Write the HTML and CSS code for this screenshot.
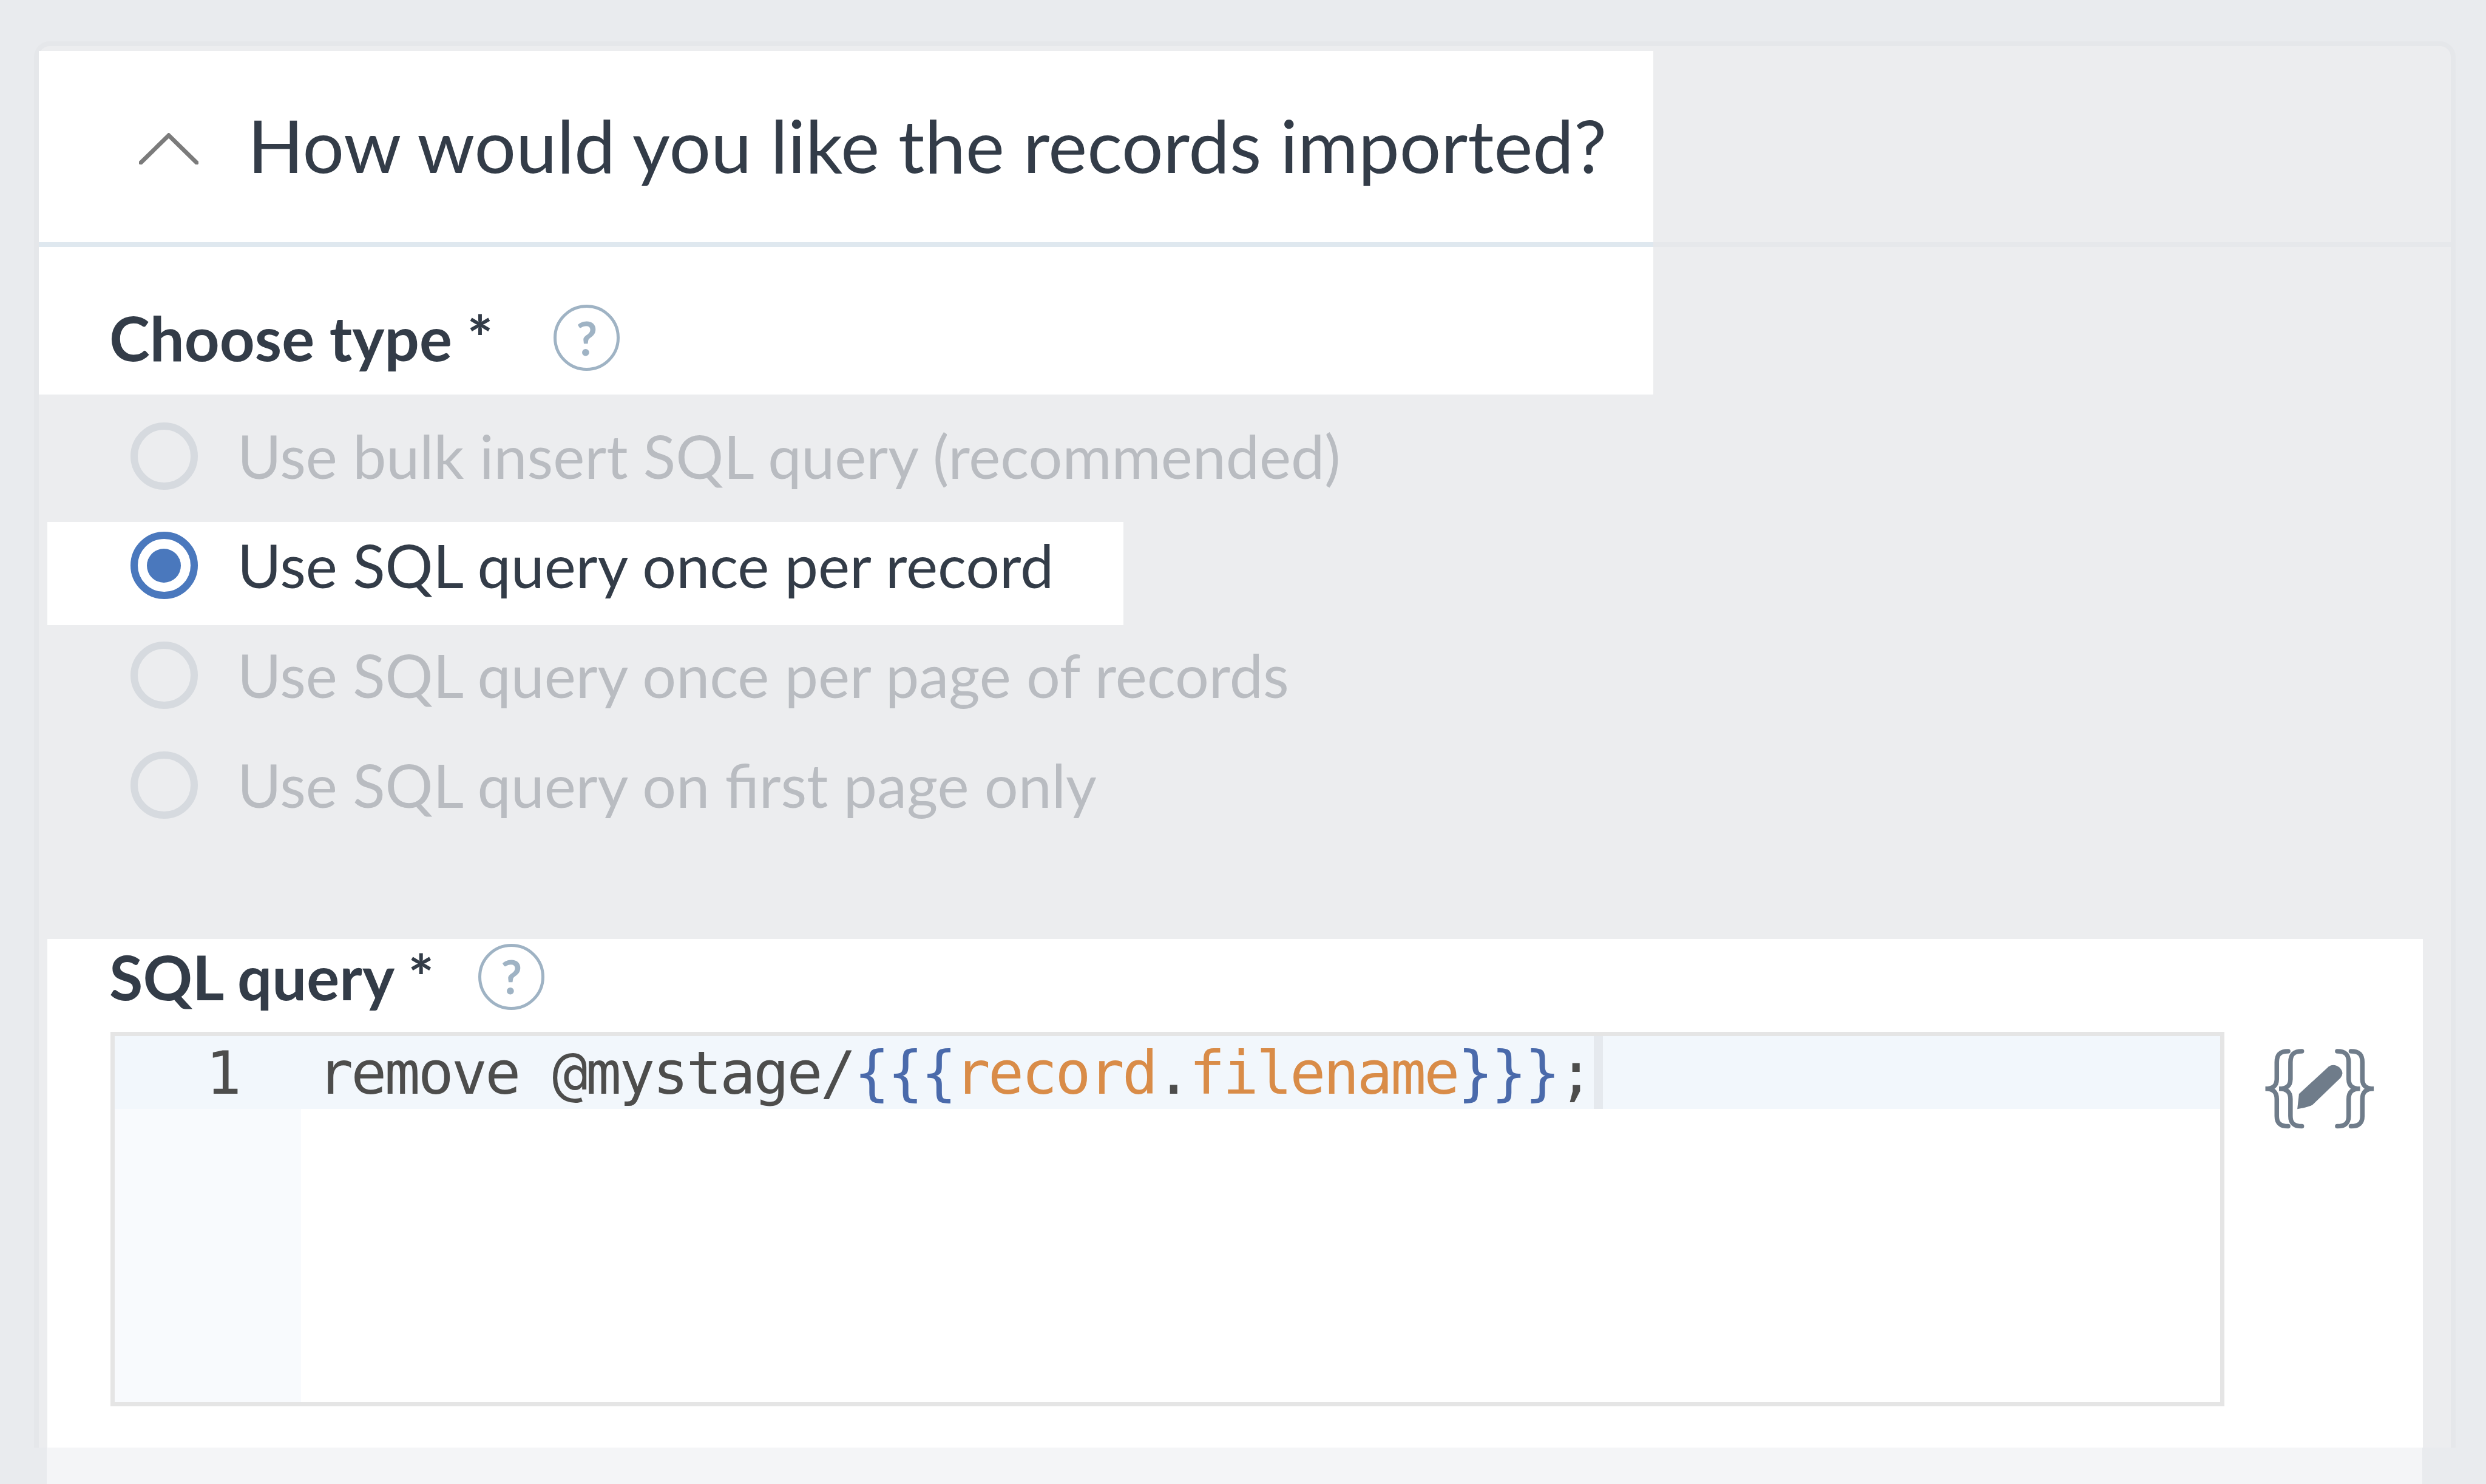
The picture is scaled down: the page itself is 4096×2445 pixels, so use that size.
FILE: index.html
```html
<!DOCTYPE html>
<html lang="en">
<head>
<meta charset="utf-8">
<title>Records import</title>
<link rel="stylesheet" href="styles.css">
</head>
<body>
<main class="page">
  <section class="card">
    <header class="head">
      <div class="head-title">
        <svg class="chevron" viewBox="0 0 98 52"><path d="M3 49 L49 4 L95 49"/></svg>
        <h1 class="title">How would you like the records imported?</h1>
      </div>
    </header>
    <div class="type-label">
      <span class="label">Choose type *</span>
      <span class="help help-type">?</span>
    </div>
    <div class="options">
      <div class="option disabled"><span class="radio"></span><span class="option-text">Use bulk insert SQL query (recommended)</span></div>
      <div class="option active"><span class="radio"><span class="dot"></span></span><span class="option-text">Use SQL query once per record</span></div>
      <div class="option disabled"><span class="radio"></span><span class="option-text">Use SQL query once per page of records</span></div>
      <div class="option disabled"><span class="radio"></span><span class="option-text">Use SQL query on first page only</span></div>
    </div>
    <div class="sql">
      <div class="sql-label">
        <span class="label">SQL query *</span>
        <span class="help help-sql">?</span>
      </div>
      <div class="sql-body">
        <div class="editor">
          <div class="gutter"><div class="gutter-line">1</div></div>
          <div class="code">
            <div class="code-line">remove @mystage/<span class="brace">{{{</span><span class="var">record</span>.<span class="var">filename</span><span class="brace">}}}</span>;</div>
            <span class="cursor"></span>
          </div>
        </div>
        <svg class="tpl-icon" viewBox="0 0 780 600">
          <g class="braces">
            <path d="M265 128 C222 128 205 145 205 185 V272 C205 305 190 325 145 325 C190 325 205 345 205 380 V468 C205 505 222 522 265 522"/>
            <path d="M337 128 C294 128 277 145 277 185 V272 C277 305 262 325 217 325 C262 325 277 345 277 380 V468 C277 505 294 522 337 522"/>
            <path d="M523 128 C566 128 583 145 583 185 V272 C583 305 598 325 643 325 C598 325 583 345 583 380 V468 C583 505 566 522 523 522"/>
            <path d="M595 128 C638 128 655 145 655 185 V272 C655 305 670 325 715 325 C670 325 655 345 655 380 V468 C655 505 638 522 595 522"/>
          </g>
          <path class="pencil" d="M322 352 L478 208 Q505 190 535 213 Q562 240 540 268 L395 408 Q380 420 313 432 Z"/>
        </svg>
      </div>
    </div>
  </section>
  <div class="band"></div>
</main>
</body>
</html>
```
FILE: styles.css
```css
html, body {
  margin: 0;
  padding: 0;
  height: 100%;
  overflow: hidden;
  background: #e9ebee;
}
.page {
  width: 4096px;
  height: 2445px;
  padding-top: 68px;
  box-sizing: border-box;
  font-family: "Lato", "Noto Sans", sans-serif;
  color: #333c48;
}
.card {
  box-sizing: border-box;
  margin-left: 56px;
  width: 3990px;
  height: 2317px;
  background: #ecedef;
  border: 8px solid #e5e7ea;
  border-bottom: 0;
  border-radius: 26px 26px 0 0;
}
.head {
  margin-top: 8px;
  border-bottom: 8px solid #e6e8eb;
}
.head-title {
  box-sizing: border-box;
  width: 2660px;
  height: 323px;
  margin-bottom: -8px;
  padding-left: 165px;
  display: flex;
  align-items: center;
  background: #fff;
  border-bottom: 8px solid #dfe8ef;
}
.chevron {
  width: 98px;
  height: 52px;
  margin-top: 6px;
  margin-right: 81px;
  flex: none;
}
.chevron path {
  fill: none;
  stroke: #7b7b7b;
  stroke-width: 7;
  stroke-linecap: round;
}
.title {
  margin: 0 0 6px;
  font-size: 121px;
  font-weight: 400;
  line-height: 300px;
  white-space: nowrap;
}
.type-label {
  box-sizing: border-box;
  width: 2660px;
  height: 243px;
  padding: 89px 0 0 116px;
  display: flex;
  align-items: flex-start;
  background: #fff;
}
.label {
  font-size: 101px;
  font-weight: 700;
  line-height: 120px;
  white-space: nowrap;
}
.help {
  box-sizing: border-box;
  width: 109px;
  height: 109px;
  display: flex;
  align-items: center;
  justify-content: center;
  flex: none;
  border: 5px solid #9fb3c4;
  border-radius: 50%;
  color: #9fb3c4;
  font-size: 76px;
  font-weight: 700;
  line-height: 1;
}
.help-type { margin: 6px 0 0 100px; }
.help-sql { margin: 6px 0 0 73px; }
.options {
  padding: 29px 0 0 14px;
}
.option {
  box-sizing: border-box;
  width: 1773px;
  height: 170.7px;
  margin-bottom: 10px;
  padding: 16.5px 0 0 136.5px;
  display: flex;
  align-items: center;
  align-content: flex-start;
}
.option.active { background: #fff; }
.radio {
  box-sizing: border-box;
  width: 111px;
  height: 111px;
  margin-right: 65.5px;
  display: flex;
  align-items: center;
  justify-content: center;
  flex: none;
  align-self: flex-start;
  border: 12px solid #d6dadf;
  border-radius: 50%;
}
.active .radio { border-color: #4a78bd; }
.dot {
  width: 56px;
  height: 56px;
  border-radius: 50%;
  background: #4a78bd;
}
.option-text {
  align-self: flex-start;
  font-size: 98.6px;
  line-height: 111px;
  white-space: nowrap;
}
.disabled .option-text { color: #b9bcc1; }
.sql {
  box-sizing: border-box;
  width: 3914px;
  height: 838px;
  margin: 155px 0 0 14px;
  padding-top: 2px;
  background: #fff;
}
.sql-label {
  height: 151.5px;
  padding-left: 102px;
  display: flex;
  align-items: flex-start;
}
.sql-body {
  display: flex;
  align-items: flex-start;
  padding-left: 104px;
}
.editor {
  box-sizing: border-box;
  width: 3482.5px;
  height: 616.5px;
  display: flex;
  flex: none;
  border: 7.5px solid #e5e5e5;
  font-family: "DejaVu Sans Mono", monospace;
  font-size: 98px;
  letter-spacing: -3.75px;
  color: #4d4d4c;
}
.gutter {
  width: 307px;
  flex: none;
  background: #f8fafd;
}
.gutter-line {
  height: 120px;
  padding-left: 150px;
  line-height: 122px;
  background: #f2f7fc;
}
.code {
  position: relative;
  flex: 1;
  min-width: 0;
}
.code-line {
  height: 120px;
  padding-left: 27px;
  line-height: 122px;
  white-space: pre;
  background: #f2f7fc;
}
.brace { color: #4a6aab; }
.var { color: #d98c48; }
.cursor {
  position: absolute;
  top: 0;
  left: 2129.5px;
  width: 15px;
  height: 120px;
  background: #e5e9ee;
}
.tpl-icon {
  width: 244.5px;
  height: 188px;
  margin: -8px 0 0 22.5px;
  flex: none;
}
.braces path {
  fill: none;
  stroke: #6f7c8a;
  stroke-width: 24;
  stroke-linecap: round;
}
.pencil { fill: #6f7c8a; }
.band {
  width: 3914px;
  height: 60px;
  margin-left: 77px;
  background: #f4f5f7;
}
```
